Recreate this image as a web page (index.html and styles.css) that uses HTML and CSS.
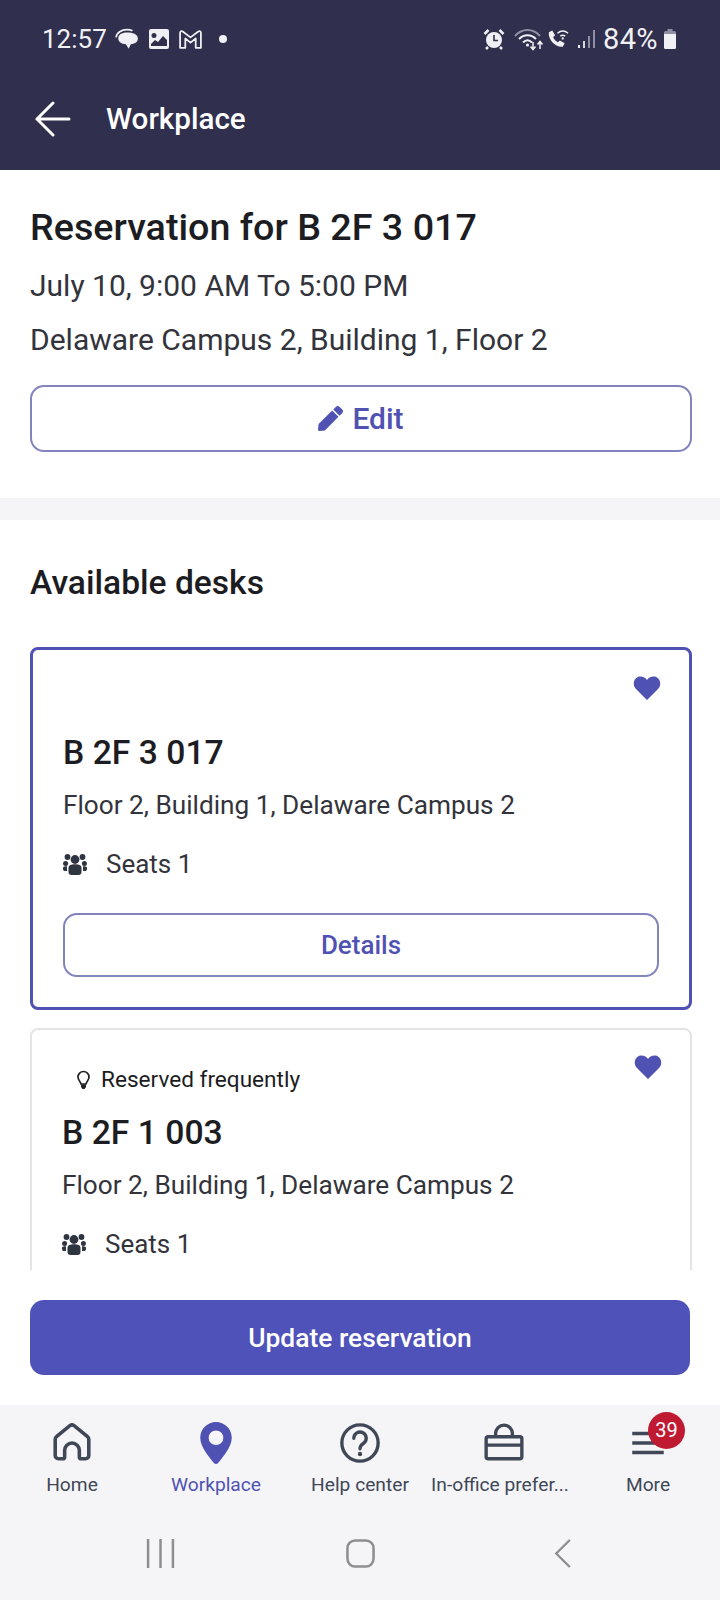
FILE: index.html
```html
<!DOCTYPE html>
<html>

<head>
    <title>Workplace</title>
    <link rel="stylesheet" href="styles.css">
</head>

<body>
    <header class="top">
        <div class="status">
            <span class="clock">12:57</span>
            <svg class="st-icon msg" viewBox="0 0 22 20"><path d="M11 4c5 0 10 1.500 10 5.500 0 3.500-3.500 5-6.500 5.200L12.500 19l-2.500-4.300C6 14.500 3 12.500 3 9.500 3 6 6 4 11 4z" fill="#f1f1f5"/><path d="M1 8.500C1.500 4 6 1.500 11 1.500c2 0 3.500.3 5 1" stroke="#f1f1f5" stroke-width="1.600" fill="none"/></svg>
            <svg class="st-icon pic" viewBox="0 0 22 22"><path fill-rule="evenodd" d="M3 1h16a2 2 0 0 1 2 2v16a2 2 0 0 1-2 2H3a2 2 0 0 1-2-2V3a2 2 0 0 1 2-2zm3 4a2.500 2.500 0 1 0 0 5 2.500 2.500 0 0 0 0-5zM3 18h16v-6l-4-4-5 6-3-2-4 4z" fill="#f1f1f5"/></svg>
            <svg class="st-icon gm" viewBox="0 0 24 20"><path d="M2 3.500C2 2 3.500 1.500 4.500 2.300L12 8l7.500-5.700C20.500 1.500 22 2 22 3.500V18h-5V9l-5 4-5-4v9H2z" fill="none" stroke="#f1f1f5" stroke-width="1.700" stroke-linejoin="round"/></svg>
            <span class="dot"></span>
            <span class="status-gap"></span>
            <svg class="st-icon alarm" viewBox="0 0 22 22"><circle cx="11" cy="12" r="8" fill="#f1f1f5"/><path d="M1.500 6l4-4M20.500 6l-4-4M5 19l-2 2M17 19l2 2" stroke="#f1f1f5" stroke-width="2.500"/><path d="M11 7v5.500h4" stroke="#302f4d" stroke-width="1.600" fill="none"/></svg>
            <svg class="st-icon wifi" viewBox="0 0 30 24"><path d="M1 9C8 1 19 1 26 9" stroke="#8f8ea3" stroke-width="2" fill="none"/><path d="M5 12c5-5 12-5 17 0M9 15.500c3-3 6-3 9 0" stroke="#f1f1f5" stroke-width="2" fill="none"/><circle cx="13.500" cy="18" r="1.600" fill="#f1f1f5"/><path d="M19 15v7m-2.500-2.500l2.500 3 2.500-3" stroke="#f1f1f5" stroke-width="1.500" fill="none"/><path d="M26 22v-7m-2.500 2.500l2.500-3 2.500 3" stroke="#f1f1f5" stroke-width="1.500" fill="none"/></svg>
            <svg class="st-icon call" viewBox="0 0 24 22"><path d="M3 4l3.500-2 3 5-2 2c.5 2 2.500 4.500 5 5.500l2-2 5 3-2 3.500C10 20 2 12 3 4z" fill="#f1f1f5"/><path d="M12 5c3.500-3 7.500-3 11 0M15 8c2-1.500 3-1.500 5 0" stroke="#f1f1f5" stroke-width="1.600" fill="none"/><circle cx="17.500" cy="10.500" r="1.200" fill="#f1f1f5"/></svg>
            <svg class="st-icon bars" viewBox="0 0 20 20"><path d="M2 16h2v3H2z" fill="#f1f1f5"/><path d="M7 12h2v7H7z" fill="#d8d8e0"/><path d="M12 7h2v12h-2zM17 1h2v18h-2z" fill="#8f8ea3"/></svg>
            <span class="batt-pct">84%</span>
            <svg class="st-icon batt" viewBox="0 0 14 22"><path d="M4.500 1h5v2h-5z" fill="#8f8ea3"/><path d="M2.500 3h9A1.500 1.500 0 0 1 13 4.500V6H1V4.500A1.500 1.500 0 0 1 2.500 3z" fill="#8f8ea3"/><path d="M1 6h12v13.500a1.500 1.500 0 0 1-1.500 1.500h-9A1.500 1.500 0 0 1 1 19.500z" fill="#f1f1f5"/></svg>
        </div>
        <div class="appbar">
            <svg class="back" viewBox="0 0 36 36"><path d="M34 18H2M18 2L2 18l16 16" fill="none" stroke="#fff" stroke-width="3" stroke-linecap="round" stroke-linejoin="round"/></svg>
            <span class="appbar-title">Workplace</span>
        </div>
    </header>

    <main class="content">
        <section class="summary">
            <h1>Reservation for B 2F 3 017</h1>
            <p>July 10, 9:00 AM To 5:00 PM</p>
            <p>Delaware Campus 2, Building 1, Floor 2</p>
            <button class="btn btn-edit">
                <svg class="pencil" viewBox="0 0 512 512"><path d="M290.740 93.240l128.020 128.020-277.990 277.990-114.140 12.600C11.350 513.540-1.560 500.620.140 485.340l12.700-114.220 277.900-277.880zm207.200-19.060l-60.110-60.110c-18.750-18.750-49.160-18.750-67.910 0l-56.550 56.550 128.020 128.020 56.550-56.550c18.750-18.760 18.750-49.160 0-67.910z" fill="#4f52b2"/></svg>
                Edit
            </button>
        </section>

        <section class="desks">
            <h2>Available desks</h2>

            <article class="card selected">
                <svg class="heart" viewBox="0 0 28 26"><path d="M14 25L3 14C-1 10 .5 2.500 6.500 1.500 9.500 1 12.500 2.500 14 5c1.500-2.500 4.500-4 7.500-3.500C27.500 2.500 29 10 25 14z" fill="#4f52b2"/></svg>
                <div class="hint"></div>
                <h3>B 2F 3 017</h3>
                <p class="place">Floor 2, Building 1, Delaware Campus 2</p>
                <div class="seats">
                    <svg class="people" viewBox="0 0 24 22"><use href="#people"/></svg>
                    Seats 1
                </div>
                <button class="btn btn-details">Details</button>
            </article>

            <article class="card">
                <svg class="heart" viewBox="0 0 28 26"><path d="M14 25L3 14C-1 10 .5 2.500 6.500 1.500 9.500 1 12.500 2.500 14 5c1.500-2.500 4.500-4 7.500-3.500C27.500 2.500 29 10 25 14z" fill="#4f52b2"/></svg>
                <div class="hint">
                    <svg class="bulb" viewBox="0 0 14 20"><path d="M7 1.500a5.500 5.500 0 0 0-5.500 5.500c0 3 2.500 4.500 3 7h5c.5-2.500 3-4 3-7A5.500 5.500 0 0 0 7 1.500z" fill="none" stroke="#1f2025" stroke-width="1.700"/><path d="M4.500 14.500h5V17l-1.500 2H6l-1.500-2z" fill="#1f2025"/></svg>
                    Reserved frequently
                </div>
                <h3>B 2F 1 003</h3>
                <p class="place">Floor 2, Building 1, Delaware Campus 2</p>
                <div class="seats">
                    <svg class="people" viewBox="0 0 24 22"><use href="#people"/></svg>
                    Seats 1
                </div>
            </article>
        </section>
    </main>

    <div class="action">
        <button class="btn-update">Update reservation</button>
    </div>

    <nav class="tabs">
        <a class="tab">
            <svg class="tab-icon" viewBox="0 0 40 40"><path d="M4 16.500c0-1 .5-2 1.500-2.800L18 3.500a3.200 3.200 0 0 1 4 0l12.500 10.200c1 .8 1.500 1.800 1.500 2.800V32a3 3 0 0 1-3 3h-4a2 2 0 0 1-2-2v-6a7 7 0 0 0-14 0v6a2 2 0 0 1-2 2H7a3 3 0 0 1-3-3z" fill="none" stroke="#404756" stroke-width="3.400" stroke-linejoin="round"/></svg>
            <span>Home</span>
        </a>
        <a class="tab active">
            <svg class="tab-icon" viewBox="0 0 40 40"><path fill-rule="evenodd" d="M20 0C12 0 5 6.500 5 15c0 8.500 8 18 13 24a2.500 2.500 0 0 0 4 0c5-6 13-15.500 13-24C35 6.500 28 0 20 0zm0 8a7 7 0 1 1 0 14 7 7 0 0 1 0-14z" fill="#4f52b2"/></svg>
            <span>Workplace</span>
        </a>
        <a class="tab">
            <svg class="tab-icon" viewBox="0 0 44 44"><circle cx="22" cy="22" r="19" fill="none" stroke="#404756" stroke-width="3.500"/><path d="M15.500 17a6.500 6.500 0 1 1 10 5.500c-2.500 1.500-3.500 3-3.500 5.500" fill="none" stroke="#404756" stroke-width="3.500" stroke-linecap="round"/><circle cx="22" cy="33.500" r="2.300" fill="#404756"/></svg>
            <span>Help center</span>
        </a>
        <a class="tab tab-long">
            <svg class="tab-icon" viewBox="0 0 40 40"><path d="M5 14h30a2 2 0 0 1 2 2v17a2 2 0 0 1-2 2H5a2 2 0 0 1-2-2V16a2 2 0 0 1 2-2zM3 22h34M12 14v-3a8 8 0 0 1 16 0v3" fill="none" stroke="#404756" stroke-width="3.200"/></svg>
            <span>In-office prefer...</span>
        </a>
        <a class="tab">
            <svg class="tab-icon" viewBox="0 0 40 40"><path d="M5 11h30M5 20h30M5 29h30" stroke="#404756" stroke-width="3.400" fill="none"/></svg>
            <span>More</span>
            <b class="badge">39</b>
        </a>
    </nav>

    <div class="sysnav">
        <svg class="sys-recent" viewBox="0 0 28 28"><path d="M2 0v28M14 0v28M26 0v28" stroke="#8e8e90" stroke-width="2.400"/></svg>
        <svg class="sys-home" viewBox="0 0 30 30"><rect x="1.500" y="1.500" width="27" height="27" rx="8" fill="none" stroke="#8e8e90" stroke-width="2.600"/></svg>
        <svg class="sys-back" viewBox="0 0 18 30"><path d="M16 1L2 15l14 14" fill="none" stroke="#8e8e90" stroke-width="2.400"/></svg>
    </div>

    <svg class="defs" width="0" height="0">
        <symbol id="people" viewBox="0 0 24 22">
            <circle cx="12" cy="6.500" r="4.400" fill="#2f3441"/>
            <circle cx="4.500" cy="4" r="2.900" fill="#2f3441"/>
            <circle cx="19.500" cy="4" r="2.900" fill="#2f3441"/>
            <circle cx="2.600" cy="10.500" r="2.500" fill="#2f3441"/>
            <circle cx="21.400" cy="10.500" r="2.500" fill="#2f3441"/>
            <path d="M5.500 15c0-3 2.500-3.800 6.500-3.800s6.500.8 6.500 3.800v4c0 1.800-1.200 3-3 3h-7c-1.800 0-3-1.200-3-3z" fill="#2f3441"/>
            <path d="M0 15c0-1 1-1.800 2.500-1.800H4V18H1.500C.5 18 0 17 0 15.500zM24 15c0-1-1-1.800-2.500-1.800H20V18h2.500c1 0 1.500-1 1.500-2.500z" fill="#2f3441"/>
        </symbol>
    </svg>
</body>

</html>
```

FILE: styles.css
```css
* {
    box-sizing: border-box;
}

html,
body {
    margin: 0;
    height: 1600px;
}

body {
    display: flex;
    flex-direction: column;
    font-family: Roboto, "Liberation Sans", sans-serif;
    color: #1c1d22;
    background: #fff;
    overflow: hidden;
}

h1,
h2,
h3,
p {
    margin: 0;
    font-weight: 500;
}

button {
    font-family: inherit;
    cursor: pointer;
}

.defs {
    position: absolute;
}

/* header */
.top {
    height: 170px;
    flex: none;
    background: #302f4d;
    color: #fff;
}

.status {
    height: 80px;
    padding: 0 42px 2px 42px;
    display: flex;
    align-items: center;
    color: #f1f1f5;
    font-size: 26px;
}

.clock {
    margin-right: 8px;
}

.st-icon {
    flex: none;
    display: block;
}

.msg {
    width: 24px;
    height: 22px;
    margin-right: 9px;
}

.pic {
    width: 22px;
    height: 22px;
    margin-right: 8px;
}

.gm {
    width: 25px;
    height: 21px;
}

.dot {
    width: 8px;
    height: 8px;
    margin-left: 16px;
    border-radius: 50%;
    background: #f1f1f5;
}

.status-gap {
    flex: 1;
}

.alarm {
    width: 22px;
    height: 22px;
    margin-right: 9px;
}

.wifi {
    width: 30px;
    height: 24px;
    margin-right: 2px;
}

.call {
    width: 23px;
    height: 22px;
    margin-right: 7px;
}

.bars {
    width: 20px;
    height: 20px;
    margin-right: 7px;
}

.batt-pct {
    font-size: 29px;
    letter-spacing: 0.4px;
    margin-right: 4px;
}

.batt {
    width: 16px;
    height: 22px;
}

.appbar {
    height: 78px;
    padding-left: 35px;
    display: flex;
    align-items: center;
}

.back {
    width: 36px;
    height: 36px;
    margin-right: 35px;
}

.appbar-title {
    font-size: 29.600px;
    font-weight: 500;
}

/* main scroll area */
.content {
    height: 1100px;
    flex: none;
    overflow: hidden;
}

.summary {
    height: 350px;
    padding: 34px 28px 0 30px;
    border-bottom: 22px solid #f5f5f7;
}

.summary h1 {
    font-size: 37.700px;
    line-height: 46px;
    margin-bottom: 16px;
}

.summary p {
    font-size: 30px;
    line-height: 40px;
    font-weight: 400;
    color: #33343b;
    margin-bottom: 14px;
}

.btn {
    display: block;
    width: 100%;
    background: #fff;
    border: 2px solid #8284bd;
    border-radius: 14px;
    color: #4f52b2;
    font-weight: 500;
}

.btn-edit {
    height: 67px;
    margin-top: 25px;
    font-size: 30px;
    display: flex;
    align-items: center;
    justify-content: center;
    gap: 9px;
}

.pencil {
    width: 25px;
    height: 25px;
}

.desks {
    padding: 40px 28px 0 30px;
}

.desks h2 {
    font-size: 33.600px;
    line-height: 46px;
    margin-bottom: 41px;
}

.card {
    position: relative;
    border: 2px solid #e4e4e6;
    border-radius: 8px;
    padding: 0 30px 90px;
    margin-bottom: 18px;
}

.card.selected {
    border: 3px solid #4f52b2;
    height: 363px;
}

.heart {
    position: absolute;
    top: 24px;
    right: 28px;
    width: 28px;
    height: 26px;
}

.card.selected .heart {
    top: 25px;
}

.hint {
    height: 65px;
    padding: 34px 0 0 14px;
    display: flex;
    align-items: center;
    gap: 10px;
    font-size: 22.600px;
    line-height: 30px;
}

.bulb {
    width: 15px;
    height: 20px;
}

.card h3 {
    font-size: 33.700px;
    line-height: 46px;
    margin-top: 15px;
}

.place {
    font-size: 26.200px;
    line-height: 34px;
    font-weight: 400;
    color: #33343b;
    margin-top: 12px;
}

.seats {
    margin-top: 25px;
    height: 34px;
    display: flex;
    align-items: center;
    font-size: 26px;
    color: #33343b;
}

.people {
    width: 24px;
    height: 22px;
    margin-right: 19px;
}

.btn-details {
    height: 64px;
    margin-top: 32px;
    font-size: 26px;
}

/* update button */
.action {
    height: 135px;
    flex: none;
    padding: 30px 30px 0 30px;
}

.btn-update {
    display: block;
    width: 660px;
    height: 75px;
    border: 0;
    border-radius: 14px;
    background: #4f52b9;
    color: #fff;
    font-size: 26.400px;
    font-weight: 500;
}

/* tabs */
.tabs {
    height: 115px;
    flex: none;
    display: grid;
    grid-template-columns: repeat(5, 144px);
    background: #f5f5f8;
}

.tab {
    position: relative;
    display: flex;
    flex-direction: column;
    align-items: center;
    padding-top: 17px;
    font-size: 19.200px;
    color: #404756;
    font-weight: 400;
    white-space: nowrap;
}

.tab.active {
    color: #4f52b2;
}

.tab-long span {
    margin-right: 8px;
}

.tab-icon {
    width: 42px;
    height: 42px;
    margin-bottom: 9px;
}

.tab span {
    line-height: 24px;
}

.badge {
    position: absolute;
    top: 7px;
    left: 72px;
    width: 37px;
    height: 37px;
    border-radius: 50%;
    background: #c01a33;
    color: #fff;
    font-size: 20px;
    font-weight: 400;
    line-height: 37px;
    text-align: center;
}

/* android nav */
.sysnav {
    flex: 1;
    position: relative;
    display: grid;
    grid-template-columns: repeat(3, 1fr);
    justify-items: center;
    align-content: start;
    padding: 0 60px;
    background: #f5f5f8;
}

.sysnav svg {
    margin-top: 19px;
    height: 29px;
}

.sys-recent {
    width: 29px;
}

.sys-home {
    width: 29px;
}

.sys-back {
    width: 18px;
    margin-left: 6px;
}
```
